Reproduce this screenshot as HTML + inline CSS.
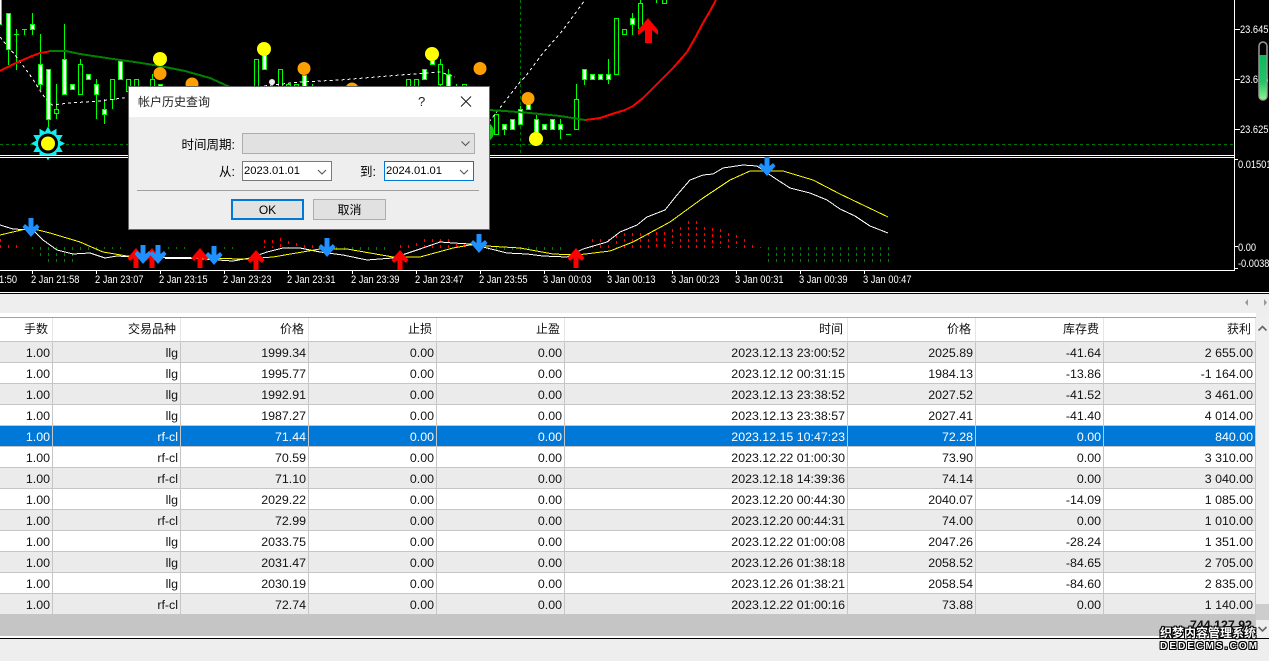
<!DOCTYPE html>
<html><head><meta charset="utf-8"><style>
html,body{margin:0;padding:0;width:1269px;height:661px;overflow:hidden;background:#eee;font-family:"Liberation Sans","Noto Sans CJK SC",sans-serif}
svg{position:absolute;left:0;top:0}
.a{position:absolute}
table{position:absolute;left:0;top:318px;width:1256px;table-layout:fixed;border-collapse:separate;border-spacing:0;font-size:12.4px;color:#111}
td,th{box-sizing:border-box;height:21px;padding:0 2px 0 0;text-align:right;border-right:1px solid #c6c6c6;border-bottom:1px solid #c6c6c6;white-space:nowrap;overflow:hidden}
td{line-height:18px;padding-top:2px}
th{height:24px;font-weight:normal;font-size:12px;background:#fff;border-right:1px solid #e6e6e6;border-bottom:1px solid #c6c6c6;padding-right:4px;line-height:23px}
tr.g td{background:#ebebeb}tr.w td{background:#fff}tr.s td{background:#0078d7;color:#fff}
.dt{position:absolute;box-sizing:border-box;background:#fff;font-size:11.2px;color:#000;line-height:19px;padding-left:1px}
.btn{position:absolute;box-sizing:border-box;background:#e1e1e1;text-align:center;font-size:12px;color:#000}
.lb{position:absolute;font-size:12.5px;color:#000;text-align:right;line-height:16px}
polyline{shape-rendering:crispEdges}
</style></head><body>
<div class="a" style="left:0;top:0;width:1269px;height:294px;background:#000"></div>
<svg width="1269" height="294" viewBox="0 0 1269 294">
<defs>
<polygon id="dn" points="-2.5,0 2.5,0 2.5,9 6,6 8.5,9 0,19 -8.5,9 -6,6 -2.5,9"/>
<polygon id="up" points="-2.5,20 2.5,20 2.5,10 6,13 8.5,10 0,0 -8.5,10 -6,13 -2.5,10"/>
</defs>
<g fill="none" stroke="#007800" stroke-dasharray="3 3" shape-rendering="crispEdges">
<path d="M0 144.5H1234M520.5 0V155"/>
</g>
<path shape-rendering="crispEdges" fill="none" stroke="#0f0" d="M8.5 49V65M16.5 29V70M14 34.5H19M24.5 29V35M22 29.5H27M32.5 13V35M40.5 34V90M48.5 119V127M56.5 84V119M64.5 24V94M80.5 59V64M96.5 79V119M104.5 99V124M112.5 99V109M120.5 59V79M152.5 74V90M440.5 59V90M448.5 69V90M456.5 84V90M312.5 84V90M504.5 124V135M520.5 106V124M536.5 115V132M560.5 119V139M566 134.5H571M576.5 84V99M584.5 79V85M608.5 59V84M632.5 13V35M640.5 0V28M656.5 0V3"/>
<path shape-rendering="crispEdges" fill="#000" stroke="#0f0" d="M54.5 109.5h4v4h-4zM78.5 64.5h4v30h-4zM110.5 79.5h4v20h-4zM126.5 79.5h4v12h-4zM134.5 79.5h4v12h-4zM150.5 79.5h4v12h-4zM254.5 59.5h4v32h-4zM278.5 69.5h4v22h-4zM286.5 84.5h4v6h-4zM294.5 84.5h4v6h-4zM406.5 79.5h4v12h-4zM414.5 79.5h4v12h-4zM438.5 64.5h4v20h-4zM462.5 84.5h4v6h-4zM494.5 114.5h4v20h-4zM574.5 99.5h4v30h-4zM614.5 18.5h4v56h-4zM622.5 29.5h4v5h-4zM638.5 3.5h4v25h-4zM662.5 -2.5h4v6h-4z"/>
<path shape-rendering="crispEdges" fill="#fff" stroke="#0f0" d="M-2.5 -1.5h4v26h-4zM6.5 13.5h4v36h-4zM30.5 24.5h4v5h-4zM38.5 64.5h4v20h-4zM46.5 69.5h4v50h-4zM62.5 59.5h4v35h-4zM70.5 84.5h4v5h-4zM86.5 74.5h4v5h-4zM94.5 84.5h4v10h-4zM102.5 109.5h4v5h-4zM118.5 61.5h4v18h-4zM158.5 84.5h4v8h-4zM262.5 55.5h4v14h-4zM302.5 75.5h4v16h-4zM422.5 69.5h4v10h-4zM430.5 60.5h4v4h-4zM446.5 74.5h4v16h-4zM502.5 124.5h4v5h-4zM510.5 119.5h4v10h-4zM518.5 109.5h4v15h-4zM526.5 104.5h4v5h-4zM534.5 119.5h4v13h-4zM542.5 124.5h4v5h-4zM550.5 119.5h4v10h-4zM558.5 124.5h4v5h-4zM582.5 69.5h4v10h-4zM590.5 74.5h4v5h-4zM598.5 74.5h4v5h-4zM606.5 74.5h4v5h-4zM630.5 18.5h4v6h-4z"/>
<circle cx="484" cy="132" r="10" fill="#14c814"/>
<polyline fill="none" stroke="#fff" stroke-dasharray="3 3" points="0,37 15,55 30,75 45,98 52,105 70,103 100,101 130,97"/>
<polyline fill="none" stroke="#fff" stroke-dasharray="3 3" points="264,86 300,82 340,80 400,75 440,72 455,77"/>
<polyline fill="none" stroke="#fff" stroke-dasharray="3 3" points="489,122 520,82 525,77 543,53 563,30 585,0"/>
<polyline fill="none" stroke="#f00" stroke-width="2" points="0,71 16,63 32,56 40,53 49,51.5"/>
<polyline fill="none" stroke="#008000" stroke-width="2" points="49,51 66,51 80,54 100,57 120,60 135,62 160,66 185,71 210,78 232,88"/>
<polyline fill="none" stroke="#008000" stroke-width="2" points="489,110 505,111 530,113 560,116 585,120"/>
<polyline fill="none" stroke="#f00" stroke-width="2" points="585,120 593,119 600,118 615,113 625,110 633,106 643,98 653,88 663,78 673,68 680,60 687,52 695,38 703,23 710,11 716,0"/>
<g fill="#ff9f00"><circle cx="160" cy="73.5" r="6.5"/><circle cx="192" cy="84" r="6.5"/><circle cx="304" cy="68.5" r="6.5"/><circle cx="352" cy="89" r="6.5"/><circle cx="480" cy="68.5" r="6.5"/><circle cx="528" cy="98.5" r="6.5"/></g>
<g fill="#ff0"><circle cx="160" cy="59" r="7"/><circle cx="264" cy="49" r="7"/><circle cx="432" cy="54" r="7"/><circle cx="536" cy="139" r="7"/></g>
<circle cx="272" cy="82" r="3" fill="#eee"/>
<g transform="translate(48,143.5)"><polygon fill="#1ee" points="0,-17 3,-11.6 8.5,-14.7 8.5,-8.5 14.7,-8.5 11.6,-3 17,0 11.6,3 14.7,8.5 8.5,8.5 8.5,14.7 3,11.6 0,17 -3,11.6 -8.5,14.7 -8.5,8.5 -14.7,8.5 -11.6,3 -17,0 -11.6,-3 -14.7,-8.5 -8.5,-8.5 -8.5,-14.7 -3,-11.6"/><circle r="10" fill="#000"/><circle r="7" fill="#ff0"/></g>
<polygon fill="#f00" points="638,30 648,18 658,30 658,35 652,30 652,43 645,43 645,30 638,35"/>
<rect x="0" y="155" width="1235" height="3" fill="#000"/>
<path shape-rendering="crispEdges" fill="none" stroke="#fff" d="M0 155.5H1235M0 157.5H1235M1234.5 0V270M0 270.5H1235M1235 29.5h5M1235 79.5h5M1235 129.5h5M1235 159.5h3M1235 246.5h3M1235 268.5h3M32.5 271V274M96.5 271V274M160.5 271V274M224.5 271V274M288.5 271V274M352.5 271V274M416.5 271V274M480.5 271V274M544.5 271V274M608.5 271V274M672.5 271V274M736.5 271V274M800.5 271V274M864.5 271V274"/>
<g fill="#fff" font-family="Liberation Sans" font-size="10.8" transform="scale(.86 1)">
<text x="1441.9" y="33">23.645</text><text x="1441.9" y="83">23.635</text><text x="1441.9" y="133">23.625</text>
<text x="1439.5" y="168">0.01501</text><text x="1439.5" y="251">0.00</text><text x="1439.5" y="267">-0.0038</text>
<text x="-1.2" y="283">1:50</text><text x="36" y="283">2 Jan 21:58</text><text x="110.5" y="283">2 Jan 23:07</text><text x="184.9" y="283">2 Jan 23:15</text><text x="259.3" y="283">2 Jan 23:23</text><text x="333.7" y="283">2 Jan 23:31</text><text x="408.1" y="283">2 Jan 23:39</text><text x="482.6" y="283">2 Jan 23:47</text><text x="557" y="283">2 Jan 23:55</text><text x="631.4" y="283">3 Jan 00:03</text><text x="705.8" y="283">3 Jan 00:13</text><text x="780.2" y="283">3 Jan 00:23</text><text x="854.7" y="283">3 Jan 00:31</text><text x="929.1" y="283">3 Jan 00:39</text><text x="1003.5" y="283">3 Jan 00:47</text>
</g>
<defs><linearGradient id="gg" x1="0" y1="0" x2="0" y2="1"><stop offset="0" stop-color="#0db85c"/><stop offset=".6" stop-color="#22c566"/><stop offset="1" stop-color="#8cf58c"/></linearGradient></defs>
<rect x="1259" y="42" width="8" height="58" rx="4" fill="#000" stroke="#9a9a9a" stroke-width="1.5"/>
<path d="M1259.5 55h7v41a3.5 3.5 0 0 1-7 0z" fill="url(#gg)"/>
<path shape-rendering="crispEdges" fill="none" stroke="#f00" stroke-dasharray="3 3" d="M0.5 239V248M8.5 245V248M16.5 245V248M264.5 240V248M272.5 240V248M280.5 238V248M288.5 241V248M296.5 243V248M304.5 245V248M312.5 245V248M400.5 245V248M408.5 245V248M416.5 243V248M424.5 239V248M432.5 239V248M440.5 239V248M448.5 239V248M456.5 244V248M464.5 244V248M592.5 239V248M600.5 239V248M608.5 239V248M616.5 235V248M624.5 233V248M632.5 233V248M640.5 233V248M648.5 233V248M656.5 232V248M664.5 232V248M672.5 229V248M680.5 227V248M688.5 221V248M696.5 221V248M704.5 227V248M712.5 228V248M720.5 229V248M728.5 233V248M736.5 235V248M744.5 239V248M752.5 245V248M760.5 247V248"/>
<path shape-rendering="crispEdges" fill="none" stroke="#008000" stroke-dasharray="3 3" d="M32.5 247V249M40.5 247V257M48.5 247V262M56.5 247V262M64.5 247V262M72.5 247V262M80.5 247V251M88.5 247V251M96.5 247V251M104.5 247V249M112.5 247V249M120.5 247V249M168.5 247V249M176.5 247V249M184.5 247V249M224.5 247V249M232.5 247V249M336.5 247V250M344.5 247V250M352.5 247V250M360.5 247V250M368.5 247V250M376.5 247V250M384.5 247V250M488.5 247V250M496.5 247V250M504.5 247V250M512.5 247V250M520.5 247V250M528.5 247V250M536.5 247V250M544.5 247V250M552.5 247V250M560.5 247V250M768.5 247V262M776.5 247V262M784.5 247V262M792.5 247V262M800.5 247V262M808.5 247V262M816.5 247V262M824.5 247V262M832.5 247V262M840.5 247V262M848.5 247V262M856.5 247V262M864.5 247V262M872.5 247V262M880.5 247V262M888.5 247V262"/>
<polyline fill="none" stroke="#fff" points="0,225 13,229 33,230 43,240 57,250 73,254 90,253 105,258 117,256 133,257 187,258 233,261 250,258 267,252 283,248 300,248 320,252 343,255 367,260 393,258 420,249 440,242 453,243 470,244 487,248 507,253 527,254 543,256 567,257 583,249 607,242 620,232 637,225 647,217 665,210 677,195 690,180 703,175 713,174 723,168 743,165 757,166 773,177 790,188 810,193 827,200 840,209 855,216 870,226 888,233"/>
<polyline fill="none" stroke="#ff0" points="0,235 30,228 50,233 80,242 103,252 127,256 187,258 247,259 273,257 320,249 347,249 393,257 420,257 453,248 470,245 520,248 553,254 577,255 610,251 633,242 670,222 703,198 730,180 750,171 783,171 813,180 840,194 888,217"/>
<rect x="165" y="257" width="26" height="2" fill="#fff"/>
<g fill="#f00"><use href="#up" x="136" y="248"/><use href="#up" x="152" y="248"/><use href="#up" x="200" y="248"/><use href="#up" x="256" y="250"/><use href="#up" x="400" y="250"/><use href="#up" x="576" y="248"/></g>
<g fill="#1e90ff"><use href="#dn" x="31" y="218"/><use href="#dn" x="143" y="245"/><use href="#dn" x="158" y="245"/><use href="#dn" x="214" y="246"/><use href="#dn" x="327" y="238"/><use href="#dn" x="479" y="234"/><use href="#dn" x="767" y="157"/></g>
<rect x="0" y="291" width="1269" height="1" fill="#000"/><rect x="0" y="292" width="1269" height="1" fill="#fff"/><rect x="0" y="293" width="1269" height="1" fill="#000"/>
</svg>

<div class="a" style="left:0;top:294px;width:1269px;height:19px;background:#eee"></div>
<div class="a" style="left:0;top:313px;width:1256px;height:4px;background:#fff"></div>
<div class="a" style="left:0;top:317px;width:1256px;height:1px;background:#a0a0a0"></div>
<table>
<colgroup><col style="width:53px"><col style="width:128px"><col style="width:128px"><col style="width:128px"><col style="width:128px"><col style="width:283px"><col style="width:128px"><col style="width:128px"><col style="width:152px"></colgroup>
<tr><th>手数</th><th>交易品种</th><th>价格</th><th>止损</th><th>止盈</th><th>时间</th><th>价格</th><th>库存费</th><th>获利</th></tr>
<tr class="g"><td>1.00</td><td>llg</td><td>1999.34</td><td>0.00</td><td>0.00</td><td>2023.12.13 23:00:52</td><td>2025.89</td><td>-41.64</td><td>2 655.00</td></tr>
<tr class="w"><td>1.00</td><td>llg</td><td>1995.77</td><td>0.00</td><td>0.00</td><td>2023.12.12 00:31:15</td><td>1984.13</td><td>-13.86</td><td>-1 164.00</td></tr>
<tr class="g"><td>1.00</td><td>llg</td><td>1992.91</td><td>0.00</td><td>0.00</td><td>2023.12.13 23:38:52</td><td>2027.52</td><td>-41.52</td><td>3 461.00</td></tr>
<tr class="w"><td>1.00</td><td>llg</td><td>1987.27</td><td>0.00</td><td>0.00</td><td>2023.12.13 23:38:57</td><td>2027.41</td><td>-41.40</td><td>4 014.00</td></tr>
<tr class="s"><td>1.00</td><td>rf-cl</td><td>71.44</td><td>0.00</td><td>0.00</td><td>2023.12.15 10:47:23</td><td>72.28</td><td>0.00</td><td>840.00</td></tr>
<tr class="w"><td>1.00</td><td>rf-cl</td><td>70.59</td><td>0.00</td><td>0.00</td><td>2023.12.22 01:00:30</td><td>73.90</td><td>0.00</td><td>3 310.00</td></tr>
<tr class="g"><td>1.00</td><td>rf-cl</td><td>71.10</td><td>0.00</td><td>0.00</td><td>2023.12.18 14:39:36</td><td>74.14</td><td>0.00</td><td>3 040.00</td></tr>
<tr class="w"><td>1.00</td><td>llg</td><td>2029.22</td><td>0.00</td><td>0.00</td><td>2023.12.20 00:44:30</td><td>2040.07</td><td>-14.09</td><td>1 085.00</td></tr>
<tr class="g"><td>1.00</td><td>rf-cl</td><td>72.99</td><td>0.00</td><td>0.00</td><td>2023.12.20 00:44:31</td><td>74.00</td><td>0.00</td><td>1 010.00</td></tr>
<tr class="w"><td>1.00</td><td>llg</td><td>2033.75</td><td>0.00</td><td>0.00</td><td>2023.12.22 01:00:08</td><td>2047.26</td><td>-28.24</td><td>1 351.00</td></tr>
<tr class="g"><td>1.00</td><td>llg</td><td>2031.47</td><td>0.00</td><td>0.00</td><td>2023.12.26 01:38:18</td><td>2058.52</td><td>-84.65</td><td>2 705.00</td></tr>
<tr class="w"><td>1.00</td><td>llg</td><td>2030.19</td><td>0.00</td><td>0.00</td><td>2023.12.26 01:38:21</td><td>2058.54</td><td>-84.60</td><td>2 835.00</td></tr>
<tr class="g"><td>1.00</td><td>rf-cl</td><td>72.74</td><td>0.00</td><td>0.00</td><td>2023.12.22 01:00:16</td><td>73.88</td><td>0.00</td><td>1 140.00</td></tr>
</table>
<div class="a" style="left:0;top:615px;width:1256px;height:21px;background:#c5c5c5;font-size:12.4px;font-weight:bold;text-align:right;line-height:21px;color:#111"><span style="margin-right:4px">744 127.92</span></div>
<div class="a" style="left:0;top:636px;width:1269px;height:2px;background:#fff"></div>
<div class="a" style="left:0;top:638px;width:1269px;height:1px;background:#000"></div>
<div class="a" style="left:1256px;top:317px;width:13px;height:321px;background:#efefef"></div>
<div class="a" style="left:1256px;top:604px;width:13px;height:16px;background:#cdcdcd"></div>
<svg width="1269" height="661" viewBox="0 0 1269 661" style="pointer-events:none">
<path d="M1258.5 330.5l4-4 4 4M1258.5 627l4 4 4-4" fill="none" stroke="#666" stroke-width="1.6"/>
<path d="M1248 299v7l-3-3.5zM1264 299v7l3-3.5z" fill="#999"/>
</svg>

<div class="a" style="left:129px;top:87px;width:360px;height:142px;background:#eee;box-sizing:border-box;box-shadow:0 0 0 1px #666"></div>
<div class="a" style="left:129px;top:87px;width:360px;height:30px;background:#fff"></div>
<div class="a" style="left:138px;top:94px;font-size:12px;line-height:16px;color:#222">帐户历史查询</div>
<div class="a" style="left:418px;top:94px;font-size:13px;line-height:16px;color:#222">?</div>
<svg width="1269" height="661" viewBox="0 0 1269 661"><path d="M461 96.5l10 10M471 96.5l-10 10" stroke="#222" stroke-width="1.1" fill="none"/></svg>
<div class="lb" style="left:165px;top:137px;width:70px">时间周期:</div>
<div class="dt" style="left:242px;top:133px;width:233px;height:21px;background:#e1e1e1;border:1px solid #adadad"></div>
<div class="lb" style="left:200px;top:164px;width:35px">从:</div>
<div class="dt" style="left:242px;top:161px;width:90px;height:20px;border:1px solid #7a7a7a">2023.01.01</div>
<div class="lb" style="left:340px;top:164px;width:36px">到:</div>
<div class="dt" style="left:384px;top:161px;width:90px;height:20px;border:1px solid #0078d7">2024.01.01</div>
<svg width="1269" height="661" viewBox="0 0 1269 661"><path d="M461.5 141.5l4 4 4-4M318 170l4 4 4-4M460 170l4 4 4-4" fill="none" stroke="#555" stroke-width="1.1"/></svg>
<div class="a" style="left:137px;top:190px;width:342px;height:1px;background:#a0a0a0"></div>
<div class="btn" style="left:231px;top:199px;width:73px;height:21px;border:2px solid #0078d7;line-height:18px">OK</div>
<div class="btn" style="left:313px;top:199px;width:73px;height:21px;border:1px solid #adadad;line-height:20px">取消</div>
<div class="a" style="left:1160px;top:626px;width:99px;font-size:12px;line-height:14px;font-weight:bold;color:#fff;white-space:nowrap;text-shadow:-1px 0 0 #000,1px 0 0 #000,0 -1px 0 #000,0 1px 0 #000,1px 1px 0 #000,-1px -1px 0 #000,1px -1px 0 #000,-1px 1px 0 #000">织梦内容管理系统</div>
<div class="a" style="left:1160px;top:640px;width:100px;font-size:10px;line-height:14px;font-weight:bold;color:#fff;letter-spacing:2.1px;white-space:nowrap;text-shadow:-1px 0 0 #000,1px 0 0 #000,0 -1px 0 #000,0 1px 0 #000,1px 1px 0 #000,-1px -1px 0 #000,1px -1px 0 #000,-1px 1px 0 #000">DEDECMS.COM</div>
</body></html>
